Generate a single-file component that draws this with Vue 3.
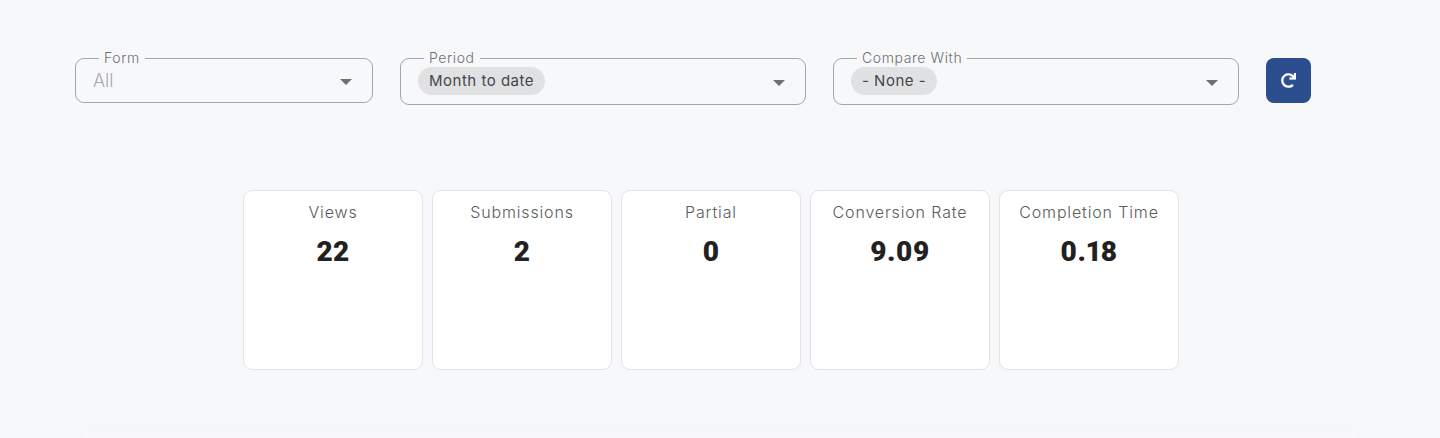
<template>
  <div class="page">
    <div class="filters">
      <fieldset class="field form-field">
        <legend>Form</legend>
        <span class="placeholder">All</span>
        <span class="arrow"></span>
      </fieldset>
      <fieldset class="field wide">
        <legend>Period</legend>
        <span class="chip">Month to date</span>
        <span class="arrow"></span>
      </fieldset>
      <fieldset class="field wide">
        <legend>Compare With</legend>
        <span class="chip">- None -</span>
        <span class="arrow"></span>
      </fieldset>
      <button class="refresh" type="button" aria-label="Refresh">
        <svg width="15" height="15" viewBox="0 0 512 512">
          <path fill="#fff" stroke="#fff" stroke-width="8" d="M500.33 0h-47.41a12 12 0 0 0-12 12.57l4 82.76A247.42 247.42 0 0 0 256 8C119.34 8 7.9 119.53 8 256.19 8.1 393.07 119.1 504 256 504a247.1 247.1 0 0 0 166.18-63.91 12 12 0 0 0 .48-17.43l-34-34a12 12 0 0 0-16.38-.55A176 176 0 1 1 402.1 157.8l-101.53-4.87a12 12 0 0 0-12.57 12v47.41a12 12 0 0 0 12 12h200.33a12 12 0 0 0 12-12V12a12 12 0 0 0-12-12z"/>
        </svg>
      </button>
    </div>
    <div class="cards">
      <div class="card" v-for="s in stats" :key="s.label">
        <div class="card-label">{{ s.label }}</div>
        <div class="card-value">{{ s.value }}</div>
      </div>
    </div>
    <div class="footer-shade"></div>
  </div>
</template>

<script setup>
const stats = [
  { label: "Views", value: "22" },
  { label: "Submissions", value: "2" },
  { label: "Partial", value: "0" },
  { label: "Conversion Rate", value: "9.09" },
  { label: "Completion Time", value: "0.18" }
]
</script>

<style>
html, body {
  margin: 0;
  background: #f7f8fa;
}
</style>

<style scoped>
.page {
  height: 438px;
  box-sizing: border-box;
  overflow: hidden;
  padding: 50px 0 0 75px;
  background: #f7f8fa;
  font-family: "Inter", "Open Sans", sans-serif;
  color: #333;
}

.filters {
  display: flex;
  align-items: flex-start;
  gap: 27px;
}

.field {
  position: relative;
  box-sizing: border-box;
  margin: 0;
  padding: 0 0 0 17px;
  border: 1px solid #a3a5a8;
  border-radius: 9px;
  display: flex;
  align-items: flex-start;
}
.form-field {
  width: 298px;
  height: 53px;
}
.wide {
  width: 406px;
  height: 55px;
}
.field legend {
  padding: 0 5px;
  margin-left: 6px;
  font-size: 14px;
  font-weight: 300;
  letter-spacing: 0.6px;
  line-height: 16px;
  color: #6f7073;
}
.placeholder {
  font-size: 18px;
  font-weight: 300;
  line-height: 24px;
  color: #a9aaad;
  margin-top: 3px;
}
.chip {
  margin-top: 1px;
  background: #e0e1e3;
  border-radius: 14px;
  padding: 0 11px;
  height: 28px;
  line-height: 28px;
  font-size: 15px;
  letter-spacing: 0.5px;
  color: #454648;
}
.arrow {
  position: absolute;
  right: 20px;
  top: 13px;
  width: 0;
  height: 0;
  border-left: 6px solid transparent;
  border-right: 6px solid transparent;
  border-top: 6px solid #6f7073;
}
.wide .arrow {
  top: 14px;
}

.refresh {
  width: 45px;
  height: 45px;
  margin-top: 8px;
  border: 0;
  padding: 0 0 1px;
  border-radius: 8px;
  background: #2d4e8e;
  display: flex;
  align-items: center;
  justify-content: center;
}

.cards {
  display: flex;
  gap: 9px;
  margin: 85px 0 0 168px;
}
.card {
  box-sizing: border-box;
  width: 180px;
  height: 180px;
  background: #fff;
  border: 1px solid #e2e3e6;
  border-radius: 9px;
  padding-top: 11px;
  text-align: center;
}
.card-label {
  font-size: 16px;
  font-weight: 300;
  letter-spacing: 0.85px;
  line-height: 20px;
  color: #5a5b5e;
}
.card-value {
  margin-top: 13px;
  font-family: "Roboto", sans-serif;
  font-size: 28px;
  line-height: 34px;
  font-weight: 900;
  letter-spacing: 0.3px;
  font-variant-numeric: proportional-nums;
  color: #212121;
}

.footer-shade {
  height: 60px;
  margin: 63px 84px 0 9px;
  background: #f8f8fa;
  box-shadow: 0 0 20px rgba(70, 80, 130, 0.03);
}
</style>
